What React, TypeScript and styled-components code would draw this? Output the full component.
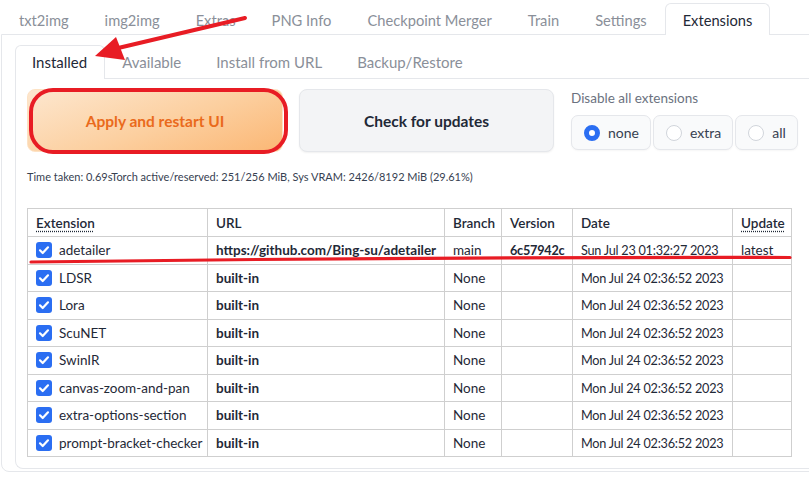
import styled, { createGlobalStyle } from 'styled-components';

const GlobalStyle = createGlobalStyle`
  body {
    margin: 0;
    background: #fff;
    font-family: Lato, "Noto Sans", sans-serif;
    color: #1f2937;
  }
`;

const topTabs = ['txt2img', 'img2img', 'Extras', 'PNG Info', 'Checkpoint Merger', 'Train', 'Settings', 'Extensions'];
const subTabs = ['Installed', 'Available', 'Install from URL', 'Backup/Restore'];

type Ext = { name: string; url: string; branch: string; version: string; date: string; update: string };

const extensions: Ext[] = [
  { name: 'adetailer', url: 'https://github.com/Bing-su/adetailer', branch: 'main', version: '6c57942c', date: 'Sun Jul 23 01:32:27 2023', update: 'latest' },
  ...['LDSR', 'Lora', 'ScuNET', 'SwinIR', 'canvas-zoom-and-pan', 'extra-options-section', 'prompt-bracket-checker'].map((name) => ({
    name,
    url: 'built-in',
    branch: 'None',
    version: '',
    date: 'Mon Jul 24 02:36:52 2023',
    update: '',
  })),
];

function CheckIcon() {
  return (
    <svg width="16" height="16" viewBox="0 0 16 16">
      <rect width="16" height="16" rx="3" fill="#2b6ef2" />
      <path d="M4 8.3l2.7 2.7L12 5.3" fill="none" stroke="#fff" strokeWidth="2.2" strokeLinecap="round" strokeLinejoin="round" />
    </svg>
  );
}

export default function App(): JSX.Element {
  return (
    <Page>
      <GlobalStyle />
      <TopTabBar>
        {topTabs.map((t) => (
          <TopTab key={t} $active={t === 'Extensions'}>
            {t}
          </TopTab>
        ))}
      </TopTabBar>
      <OuterPanel>
        <SubTabBar>
          {subTabs.map((t) => (
            <SubTab key={t} $active={t === 'Installed'}>
              {t}
            </SubTab>
          ))}
        </SubTabBar>
        <InnerPanel>
          <ActionRow>
            <ApplyButton>Apply and restart UI</ApplyButton>
            <CheckButton>Check for updates</CheckButton>
            <RadioBlock>
              <RadioLabel>Disable all extensions</RadioLabel>
              <RadioGroup>
                {['none', 'extra', 'all'].map((r) => (
                  <RadioOption key={r}>
                    <RadioDot $checked={r === 'none'} />
                    {r}
                  </RadioOption>
                ))}
              </RadioGroup>
            </RadioBlock>
          </ActionRow>
          <TimeInfo>Time taken: 0.69sTorch active/reserved: 251/256 MiB, Sys VRAM: 2426/8192 MiB (29.61%)</TimeInfo>
          <Table>
            <colgroup>
              <col style={{ width: 180 }} />
              <col style={{ width: 237 }} />
              <col style={{ width: 57 }} />
              <col style={{ width: 71 }} />
              <col style={{ width: 160 }} />
              <col style={{ width: 59 }} />
            </colgroup>
            <thead>
              <tr>
                <Th>
                  <Abbr>Extension</Abbr>
                </Th>
                <Th>URL</Th>
                <Th>Branch</Th>
                <Th>Version</Th>
                <Th>Date</Th>
                <Th>
                  <Abbr>Update</Abbr>
                </Th>
              </tr>
            </thead>
            <tbody>
              {extensions.map((e) => (
                <tr key={e.name}>
                  <Td>
                    <NameCell>
                      <CheckIcon />
                      {e.name}
                    </NameCell>
                  </Td>
                  <Td $bold>{e.url}</Td>
                  <Td>{e.branch}</Td>
                  <Td $bold $tight>
                    {e.version}
                  </Td>
                  <Td $tight>{e.date}</Td>
                  <Td>{e.update}</Td>
                </tr>
              ))}
            </tbody>
          </Table>
        </InnerPanel>
      </OuterPanel>

      <Annotations width="809" height="477" viewBox="0 0 809 477">
        <g stroke="#e81c24" fill="none" strokeLinecap="round">
          <line x1="245" y1="18" x2="114" y2="49" strokeWidth="4" />
          <rect x="31" y="90" width="255" height="62" rx="22" strokeWidth="4" />
          <path d="M31 262 Q 400 257 790 257.5" strokeWidth="3.2" />
        </g>
        <polygon points="95,56 116,37 125,60" fill="#e81c24" />
      </Annotations>
    </Page>
  );
}

const Page = styled.div`
  position: relative;
  width: 809px;
  height: 477px;
  overflow: hidden;
`;

const TopTabBar = styled.div`
  display: flex;
  align-items: flex-end;
  height: 34px;
  padding-left: 1px;
`;

const TopTab = styled.div<{ $active?: boolean }>`
  box-sizing: border-box;
  display: flex;
  align-items: center;
  padding: 1px 17px 0;
  font-size: 14.7px;
  color: ${(p) => (p.$active ? '#1f2937' : '#8a8f99')};
  background: #fff;
  border: 1px solid ${(p) => (p.$active ? '#e5e7eb' : 'transparent')};
  border-bottom: none;
  border-radius: 6px 6px 0 0;
  margin-bottom: ${(p) => (p.$active ? '-1px' : '0')};
  height: ${(p) => (p.$active ? '32px' : '31px')};
  position: relative;
  z-index: 1;
`;

const OuterPanel = styled.div`
  margin-left: 1px;
  width: 830px;
  height: 438px;
  box-sizing: border-box;
  border: 1px solid #e5e7eb;
  border-radius: 0 0 8px 8px;
  padding: 10px 0 0 13px;
`;

const SubTabBar = styled.div`
  display: flex;
  align-items: flex-end;
  height: 33px;
`;

const SubTab = styled.div<{ $active?: boolean }>`
  box-sizing: border-box;
  height: ${(p) => (p.$active ? '34px' : '32px')};
  margin-bottom: ${(p) => (p.$active ? '-1px' : '0')};
  display: flex;
  align-items: center;
  padding: 0 17px 1px 16px;
  font-size: 15px;
  color: ${(p) => (p.$active ? '#1f2937' : '#8a8f99')};
  background: #fff;
  border: 1px solid ${(p) => (p.$active ? '#e5e7eb' : 'transparent')};
  border-bottom: none;
  border-radius: 6px 6px 0 0;
  position: relative;
  z-index: 1;
`;

const InnerPanel = styled.div`
  width: 820px;
  height: 391px;
  box-sizing: border-box;
  border: 1px solid #e5e7eb;
  border-right: none;
  border-radius: 0 0 0 8px;
  padding: 10px 0 0 11px;
`;

const ActionRow = styled.div`
  display: flex;
  align-items: flex-start;
  gap: 16px;
`;

const BaseButton = styled.div`
  width: 256px;
  height: 63px;
  box-sizing: border-box;
  border-radius: 8px;
  display: flex;
  align-items: center;
  justify-content: center;
  font-size: 15.5px;
  font-weight: 700;
`;

const ApplyButton = styled(BaseButton)`
  background: linear-gradient(160deg, #fde7cf 0%, #fccf9f 55%, #fbb775 100%);
  border: 1px solid #fde2c4;
  color: #ea6a1c;
`;

const CheckButton = styled(BaseButton)`
  width: 255px;
  background: #f3f4f6;
  border: 1px solid #e5e7eb;
  color: #1f2937;
  box-shadow: 0 1px 2px rgba(0, 0, 0, 0.06);
`;

const RadioBlock = styled.div`
  display: flex;
  flex-direction: column;
  margin-left: 1px;
`;

const RadioLabel = styled.div`
  font-size: 13.5px;
  color: #6b7280;
  height: 21px;
  margin-bottom: 6px;
  margin-top: -1px;
  line-height: 21px;
`;

const RadioGroup = styled.div`
  display: flex;
  gap: 2px;
`;

const RadioOption = styled.div`
  height: 35px;
  box-sizing: border-box;
  display: flex;
  align-items: center;
  gap: 8px;
  padding: 0 11px 0 12px;
  font-size: 14px;
  color: #374151;
  background: #f9fafb;
  border: 1px solid #e5e7eb;
  border-radius: 7px;
  box-shadow: 0 1px 2px rgba(0, 0, 0, 0.04);
`;

const RadioDot = styled.span<{ $checked?: boolean }>`
  width: 16px;
  height: 16px;
  box-sizing: border-box;
  border-radius: 50%;
  background: #fff;
  border: ${(p) => (p.$checked ? '5px solid #2b6ef2' : '1px solid #d1d5db')};
`;

const TimeInfo = styled.div`
  margin-top: 15px;
  font-size: 11px;
  color: #374151;
  height: 20px;
  line-height: 20px;
`;

const Table = styled.table`
  margin-top: 21px;
  width: 765px;
  border-collapse: collapse;
  table-layout: fixed;
  font-size: 13.5px;
`;

const Th = styled.th`
  height: 27px;
  padding: 0 0 0 8px;
  text-align: left;
  font-weight: 600;
  color: #1f2937;
  border: 1px solid #cfcfcf;
`;

const Abbr = styled.span`
  text-decoration: underline dotted;
  text-underline-offset: 3px;
`;

const Td = styled.td<{ $bold?: boolean; $tight?: boolean }>`
  height: 26.5px;
  padding: 0 0 0 8px;
  font-weight: ${(p) => (p.$bold ? 700 : 400)};
  font-size: ${(p) => (p.$tight ? '12.7px' : '13.5px')};
  letter-spacing: ${(p) => (p.$tight ? '-0.25px' : 'normal')};
  color: #1f2937;
  border: 1px solid #cfcfcf;
  white-space: nowrap;
  overflow: hidden;
`;

const NameCell = styled.div`
  display: flex;
  align-items: center;
  gap: 7px;
`;

const Annotations = styled.svg`
  position: absolute;
  left: 0;
  top: 0;
  z-index: 10;
  pointer-events: none;
`;
